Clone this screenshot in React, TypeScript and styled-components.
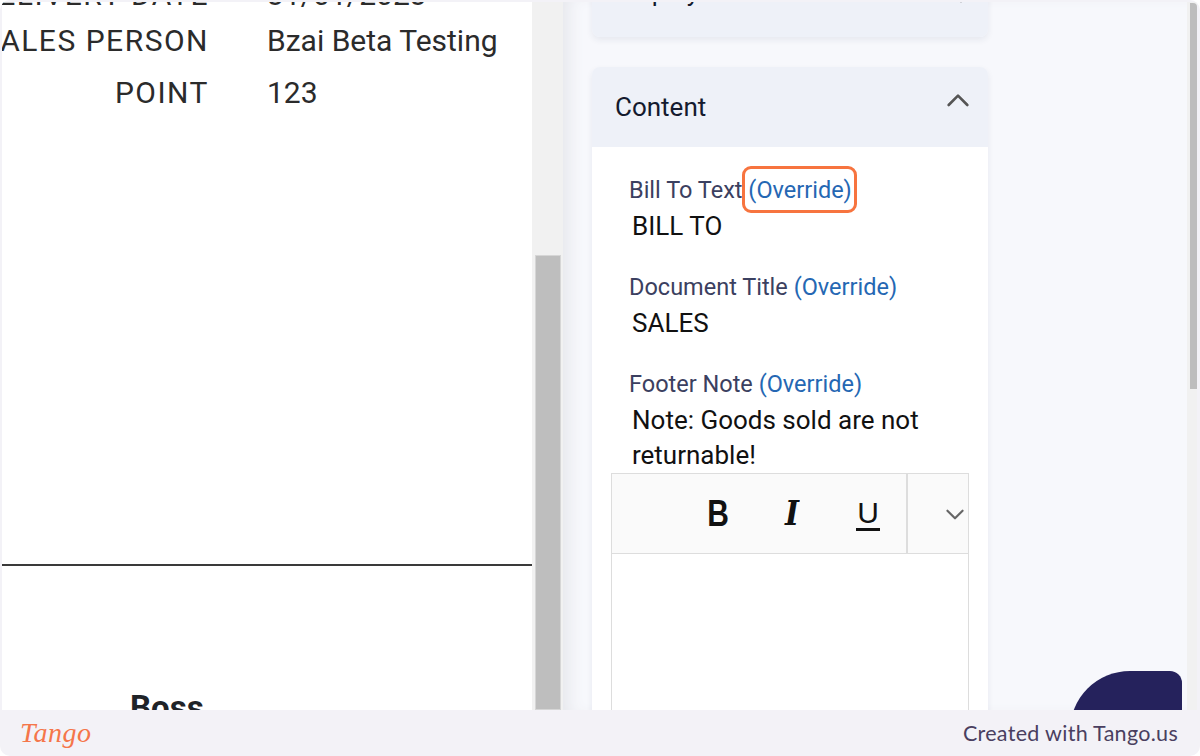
import styled, { createGlobalStyle } from "styled-components";

const GlobalStyle = createGlobalStyle`
  html, body {
    margin: 0;
    padding: 0;
    background: #ffffff;
  }
  * {
    box-sizing: border-box;
  }
`;

const previewRows = [
  { label: "DELIVERY DATE", value: "31/01/2023", h: 40 },
  { label: "SALES PERSON", value: "Bzai Beta Testing", h: 52 },
  { label: "POINT", value: "123", h: 52 },
];

const fields = [
  { label: "Bill To Text", value: "BILL TO", marked: true },
  { label: "Document Title", value: "SALES", marked: false },
  { label: "Footer Note", value: "Note: Goods sold are not returnable!", marked: false },
];

const Chevron = ({ up, size = 22, color = "#555" }: { up?: boolean; size?: number; color?: string }) => (
  <svg width={size} height={size} viewBox="0 0 24 24" fill="none">
    <polyline
      points={up ? "5,15 12,8 19,15" : "5,9 12,16 19,9"}
      stroke={color}
      strokeWidth="2"
      strokeLinecap="round"
      strokeLinejoin="round"
    />
  </svg>
);

const App = () => {
  return (
    <>
      <GlobalStyle />
      <Frame>
        <Screen>
          <Preview>
            <Sheet>
              {previewRows.map((r) => (
                <InfoRow key={r.label} $h={r.h}>
                  <InfoLabel>{r.label}</InfoLabel>
                  <InfoValue>{r.value}</InfoValue>
                </InfoRow>
              ))}
              <Rule />
              <Signature>Boss</Signature>
            </Sheet>
          </Preview>
          <Track>
            <Thumb />
          </Track>
          <Settings>
            <Column>
              <Card $first>
                <CardHeader $collapsed>
                  <CardTitle>Display</CardTitle>
                  <HeaderIcon $shift={10}>
                    <Chevron size={26} color="#555" />
                  </HeaderIcon>
                </CardHeader>
              </Card>
              <Card>
                <CardHeader>
                  <CardTitle>Content</CardTitle>
                  <HeaderIcon $shift={-12}>
                    <Chevron up size={32} color="#555" />
                  </HeaderIcon>
                </CardHeader>
                <CardBody>
                  <FieldList>
                    {fields.map((f) => (
                      <Field key={f.label}>
                        <FieldLabel>
                          {f.label}{" "}
                          <Override $marked={f.marked}>(Override)</Override>
                        </FieldLabel>
                        <FieldValue>{f.value}</FieldValue>
                      </Field>
                    ))}
                  </FieldList>
                  <Editor>
                    <Toolbar>
                      <ToolGroup>
                        <ToolButton>
                          <BoldGlyph>B</BoldGlyph>
                        </ToolButton>
                        <ToolButton>
                          <ItalicGlyph>I</ItalicGlyph>
                        </ToolButton>
                        <ToolButton>
                          <UnderlineGlyph>U</UnderlineGlyph>
                        </ToolButton>
                      </ToolGroup>
                      <MoreTools>
                        <Chevron size={26} color="#666" />
                      </MoreTools>
                    </Toolbar>
                    <EditArea />
                  </Editor>
                </CardBody>
              </Card>
            </Column>
            <ChatBubble />
          </Settings>
          <SideTrack>
            <SideThumb />
          </SideTrack>
        </Screen>
        <Footer>
          <Brand>Tango</Brand>
          <Credit>Created with Tango.us</Credit>
        </Footer>
      </Frame>
    </>
  );
};

const Frame = styled.div`
  width: 1200px;
  height: 756px;
  background: #f3f2f7;
  border-radius: 10px;
  overflow: hidden;
  display: flex;
  flex-direction: column;
`;

const Screen = styled.div`
  height: 710px;
  display: flex;
  padding: 2px 3px 0 2px;
  overflow: hidden;
`;

const Preview = styled.div`
  width: 530px;
  background: #ffffff;
  overflow: hidden;
  font-family: Roboto, "Liberation Sans", sans-serif;
  color: #2b2b2b;
`;

const Sheet = styled.div`
  margin-top: -28px;
`;

const InfoRow = styled.div<{ $h: number }>`
  display: grid;
  grid-template-columns: 206px 1fr;
  column-gap: 59px;
  height: ${(p) => p.$h}px;
  align-items: center;
  font-size: 30px;
`;

const InfoLabel = styled.div`
  text-align: right;
  white-space: nowrap;
  direction: rtl;
  overflow: hidden;
  letter-spacing: 1.5px;
  margin-right: -1px;
`;

const InfoValue = styled.div`
  white-space: nowrap;
`;

const Rule = styled.div`
  margin-top: 446px;
  height: 2px;
  background: #3a3a3a;
`;

const Signature = styled.div`
  margin: 122px 0 0 128px;
  font-size: 33px;
  font-weight: 700;
  color: #1f2328;
`;

const Track = styled.div`
  width: 31px;
  background: #f1f1f1;
  padding: 253px 2px 0 3px;
`;

const Thumb = styled.div`
  height: 100%;
  background: #bebebe;
  border: 1px solid #d6d6d6;
`;

const Settings = styled.div`
  position: relative;
  flex: 1;
  background: #f7f8fc;
  box-shadow: inset 14px 0 16px -8px #e6e7ec;
  padding-left: 29px;
  overflow: hidden;
`;

const Column = styled.div`
  width: 396px;
  display: flex;
  flex-direction: column;
`;

const Card = styled.div<{ $first?: boolean }>`
  margin-top: ${(p) => (p.$first ? "-45px" : "30px")};
  border-radius: 8px;
  box-shadow: 0 3px 6px rgba(40, 50, 90, 0.08);
  overflow: hidden;
`;

const CardHeader = styled.div<{ $collapsed?: boolean }>`
  height: 80px;
  background: #eef1f8;
  display: flex;
  align-items: center;
  justify-content: space-between;
  padding: 0 14px ${(p) => (p.$collapsed ? "10px" : "0")} 23px;
`;

const CardTitle = styled.div`
  font-family: Roboto, "Liberation Sans", sans-serif;
  font-size: 26px;
  color: #141a2e;
`;

const HeaderIcon = styled.div<{ $shift: number }>`
  display: flex;
  margin-top: ${(p) => p.$shift}px;
`;

const CardBody = styled.div`
  background: #ffffff;
  padding-top: 31px;
  height: 600px;
`;

const FieldList = styled.div`
  display: flex;
  flex-direction: column;
  gap: 31px;
`;

const Field = styled.div``;

const FieldLabel = styled.div`
  padding-left: 37px;
  font-family: Roboto, "Liberation Sans", sans-serif;
  font-size: 23.5px;
  line-height: 24px;
  color: #3b4060;
  white-space: nowrap;
`;

const Override = styled.span<{ $marked?: boolean }>`
  color: #2567b3;
  ${(p) =>
    p.$marked &&
    `
    position: relative;
    &::after {
      content: "";
      position: absolute;
      left: -6px;
      right: -5px;
      top: -10px;
      bottom: -9px;
      border: 3.5px solid #f7743f;
      border-radius: 9px;
    }
  `}
`;

const FieldValue = styled.div`
  padding: 0 40px 0 40px;
  margin-top: 7px;
  font-family: Roboto, "Liberation Sans", sans-serif;
  font-size: 26px;
  line-height: 35px;
  color: #111111;
`;

const Editor = styled.div`
  margin: 0 19px;
  border: 1px solid #dddddd;
  border-bottom: none;
`;

const Toolbar = styled.div`
  height: 80px;
  display: flex;
  background: #fafafa;
  border-bottom: 1px solid #dddddd;
`;

const ToolGroup = styled.div`
  flex: 1;
  display: flex;
  justify-content: flex-end;
  border-right: 2px solid #dddddd;
`;

const ToolButton = styled.div`
  width: 76px;
  display: flex;
  align-items: center;
  justify-content: center;
  color: #111111;
`;

const BoldGlyph = styled.span`
  display: inline-block;
  font-family: "Liberation Sans", Arial, sans-serif;
  font-weight: 700;
  font-size: 30px;
  transform: scaleY(1.2);
  margin-left: 4px;
`;

const ItalicGlyph = styled.span`
  display: inline-block;
  font-family: "DejaVu Serif", "Liberation Serif", serif;
  font-weight: 700;
  font-style: italic;
  font-size: 30px;
  transform: scaleY(1.1);
`;

const UnderlineGlyph = styled.span`
  display: inline-block;
  font-family: "Liberation Sans", Arial, sans-serif;
  font-size: 30px;
  line-height: 30px;
  border-bottom: 3px solid #111111;
  padding: 0 1px;
  margin-top: 2px;
`;

const MoreTools = styled.div`
  width: 60px;
  display: flex;
  align-items: center;
  justify-content: flex-end;
`;

const EditArea = styled.div`
  height: 200px;
  background: #ffffff;
`;

const ChatBubble = styled.div`
  position: absolute;
  left: 507px;
  top: 669px;
  width: 112px;
  height: 110px;
  background: #25225c;
  border-radius: 60px 12px 0 0;
`;

const SideTrack = styled.div`
  width: 10px;
  background: #f1f1f1;
  padding: 1px 0 0 3px;
`;

const SideThumb = styled.div`
  height: 386px;
  background: #bdbdbd;
  border-top-right-radius: 4px;
`;

const Footer = styled.div`
  height: 46px;
  display: flex;
  align-items: center;
  justify-content: space-between;
  padding: 0 22px 0 20px;
`;

const Brand = styled.div`
  font-family: "Liberation Serif", serif;
  font-style: italic;
  font-size: 28px;
  color: #f5764a;
  letter-spacing: 0.5px;
`;

const Credit = styled.div`
  font-family: Lato, "Open Sans", sans-serif;
  font-size: 21.5px;
  color: #4a3f60;
  letter-spacing: 0.3px;
`;

export default App;
